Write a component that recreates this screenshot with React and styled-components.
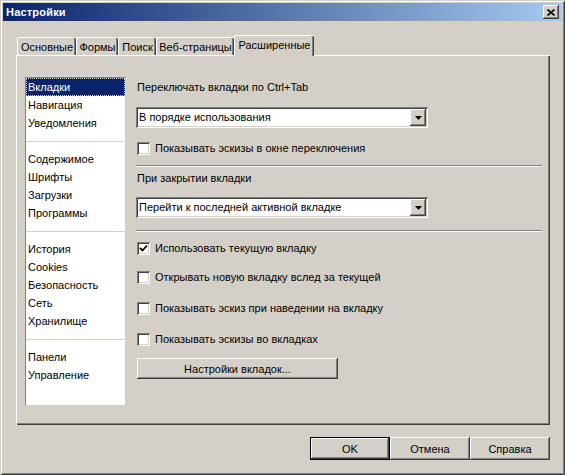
import React from 'react';
import styled, { createGlobalStyle } from 'styled-components';

const GlobalStyle = createGlobalStyle`
  html, body {
    margin: 0;
    padding: 0;
    background: #d4d0c8;
  }
  body {
    font-family: "Liberation Sans", Tahoma, Arial, sans-serif;
    font-size: 11px;
    color: #000;
  }
`;

// classic 3D edges
const raised = `
  box-shadow: inset -1px -1px #404040, inset 1px 1px #ffffff,
    inset -2px -2px #808080, inset 2px 2px #d4d0c8;
`;
const sunken = `
  box-shadow: inset 1px 1px #808080, inset -1px -1px #ffffff,
    inset 2px 2px #404040, inset -2px -2px #d4d0c8;
`;

const Window = styled.div`
  width: 565px;
  height: 475px;
  box-sizing: border-box;
  padding: 3px;
  background: #d4d0c8;
  box-shadow: inset 1px 1px #d4d0c8, inset -1px -1px #404040,
    inset 2px 2px #ffffff, inset -2px -2px #808080;
  display: flex;
  flex-direction: column;
`;

const TitleBar = styled.div`
  height: 18px;
  display: flex;
  align-items: center;
  justify-content: space-between;
  padding: 0 3px 0 3px;
  background: linear-gradient(90deg, #0a246a 0%, #a6caf0 100%);
`;

const Title = styled.span`
  color: #fff;
  font-weight: bold;
  font-size: 11px;
  letter-spacing: 0.2px;
`;

const CloseButton = styled.div`
  width: 16px;
  height: 14px;
  background: #d4d0c8;
  ${raised}
  display: flex;
  align-items: center;
  justify-content: center;
`;

const TabStrip = styled.div`
  display: flex;
  align-items: flex-end;
  height: 21px;
  margin-top: 14px;
  padding-left: 14px;
  position: relative;
  z-index: 1;
`;

const Tab = styled.div`
  width: ${p => p.$w}px;
  height: ${p => (p.$active ? 21 : 18)}px;
  margin-bottom: ${p => (p.$active ? 0 : 1)}px;
  box-sizing: border-box;
  background: #d4d0c8;
  border-top: 1px solid #fff;
  border-left: 1px solid #fff;
  border-radius: 2px 2px 0 0;
  box-shadow: inset -1px 0 #404040, inset -2px 0 #808080;
  display: flex;
  align-items: center;
  justify-content: center;
  padding-bottom: ${p => (p.$active ? 2 : 0)}px;
  white-space: nowrap;
`;

const Panel = styled.div`
  margin: -1px 0 0 13px;
  width: 534px;
  height: 370px;
  box-sizing: border-box;
  padding: 22px 0 0 9px;
  box-shadow: inset 1px 1px #ffffff, inset -1px -1px #404040, inset -2px -2px #808080;
  display: flex;
  align-items: flex-start;
`;

const ListBox = styled.div`
  width: 101px;
  height: 329px;
  box-sizing: border-box;
  background: #fff;
  border: 1px solid;
  border-color: #808080 #d4d0c8 #d4d0c8 #808080;
  display: flex;
  flex-direction: column;
`;

const ListItem = styled.div`
  height: 18px;
  line-height: 19px;
  padding-left: 2px;
  white-space: nowrap;
  background: ${p => (p.$selected ? '#0a246a' : 'transparent')};
  color: ${p => (p.$selected ? '#fff' : '#000')};
  outline: ${p => (p.$selected ? '1px dotted #d4d0c8' : 'none')};
  outline-offset: -1px;
`;

const ListSeparator = styled.div`
  height: 18px;
  display: flex;
  align-items: center;

  &::after {
    content: '';
    flex: 1;
    height: 1px;
    background: #d4d0c8;
  }
`;

const Content = styled.div`
  margin-left: 11px;
  width: 406px;
  display: flex;
  flex-direction: column;
  align-items: flex-start;
`;

const Label = styled.div`
  height: 20px;
  line-height: 20px;
  margin-top: ${p => p.$mt || 0}px;
`;

const Select = styled.div`
  width: 292px;
  height: 21px;
  box-sizing: border-box;
  padding: 2px;
  margin-top: ${p => p.$mt || 0}px;
  margin-left: -1px;
  background: #fff;
  ${sunken}
  display: flex;
  align-items: stretch;
`;

const SelectText = styled.div`
  flex: 1;
  padding-left: 1px;
  line-height: 17px;
`;

const DropButton = styled.div`
  width: 16px;
  background: #d4d0c8;
  ${raised}
  display: flex;
  align-items: center;
  justify-content: center;
`;

const CheckRow = styled.div`
  height: 18px;
  margin-top: ${p => p.$mt || 0}px;
  display: flex;
  align-items: center;
  gap: 5px;
`;

const CheckBox = styled.div`
  width: 13px;
  height: 13px;
  box-sizing: border-box;
  background: #fff;
  ${sunken}
  display: flex;
  align-items: center;
  justify-content: center;
`;

const Separator = styled.div`
  width: 406px;
  margin-top: ${p => p.$mt || 0}px;
  margin-left: -1px;
  border-top: 1px solid #808080;
  border-bottom: 1px solid #ffffff;
`;

const Button = styled.div`
  width: ${p => p.$w}px;
  height: ${p => p.$h || 21}px;
  margin-top: ${p => p.$mt || 0}px;
  box-sizing: border-box;
  background: #d4d0c8;
  ${raised}
  display: flex;
  align-items: center;
  justify-content: center;
`;

const DefaultButton = styled(Button)`
  box-shadow: inset 0 0 0 1px #000000, inset -2px -2px #404040, inset 2px 2px #ffffff,
    inset -3px -3px #808080;
`;

const Footer = styled.div`
  display: flex;
  justify-content: flex-end;
  margin-top: 12px;
  padding-right: 12px;
`;

const CloseIcon = () => (
  <svg width="8" height="7" viewBox="0 0 8 7">
    <path d="M0.5 0.5 L7.5 6.5 M7.5 0.5 L0.5 6.5" stroke="#000" strokeWidth="1.6" />
  </svg>
);

const ArrowIcon = () => (
  <svg width="7" height="4" viewBox="0 0 7 4">
    <path d="M0 0 H7 L3.5 4 Z" fill="#000" />
  </svg>
);

const CheckIcon = () => (
  <svg width="9" height="9" viewBox="0 0 9 9">
    <path d="M1 4 L3.5 6.5 L8 1.5" stroke="#000" strokeWidth="1.8" fill="none" />
  </svg>
);

const tabs = [
  { label: 'Основные', w: 59 },
  { label: 'Формы', w: 42 },
  { label: 'Поиск', w: 38 },
  { label: 'Веб-страницы', w: 78 },
  { label: 'Расширенные', w: 80, active: true },
];

const groups = [
  ['Вкладки', 'Навигация', 'Уведомления'],
  ['Содержимое', 'Шрифты', 'Загрузки', 'Программы'],
  ['История', 'Cookies', 'Безопасность', 'Сеть', 'Хранилище'],
  ['Панели', 'Управление'],
];

export default function App() {
  return (
    <>
      <GlobalStyle />
      <Window>
        <TitleBar>
          <Title>Настройки</Title>
          <CloseButton>
            <CloseIcon />
          </CloseButton>
        </TitleBar>

        <TabStrip>
          {tabs.map(t => (
            <Tab key={t.label} $w={t.w} $active={t.active}>
              {t.label}
            </Tab>
          ))}
        </TabStrip>

        <Panel>
          <ListBox>
            {groups.map((g, gi) => (
              <React.Fragment key={gi}>
                {gi > 0 && <ListSeparator />}
                {g.map(item => (
                  <ListItem key={item} $selected={item === 'Вкладки'}>
                    {item}
                  </ListItem>
                ))}
              </React.Fragment>
            ))}
          </ListBox>

          <Content>
            <Label>Переключать вкладки по Ctrl+Tab</Label>
            <Select $mt={10}>
              <SelectText>В порядке использования</SelectText>
              <DropButton>
                <ArrowIcon />
              </DropButton>
            </Select>
            <CheckRow $mt={11}>
              <CheckBox />
              Показывать эскизы в окне переключения
            </CheckRow>

            <Separator $mt={8} />

            <Label $mt={1}>При закрытии вкладки</Label>
            <Select $mt={9}>
              <SelectText>Перейти к последней активной вкладке</SelectText>
              <DropButton>
                <ArrowIcon />
              </DropButton>
            </Select>

            <Separator $mt={12} />

            <CheckRow $mt={7}>
              <CheckBox>
                <CheckIcon />
              </CheckBox>
              Использовать текущую вкладку
            </CheckRow>
            <CheckRow $mt={11}>
              <CheckBox />
              Открывать новую вкладку вслед за текущей
            </CheckRow>
            <CheckRow $mt={13}>
              <CheckBox />
              Показывать эскиз при наведении на вкладку
            </CheckRow>
            <CheckRow $mt={13}>
              <CheckBox />
              Показывать эскизы во вкладках
            </CheckRow>
            <Button $w={201} $mt={10}>Настройки вкладок...</Button>
          </Content>
        </Panel>

        <Footer>
          <DefaultButton $w={80} $h={23}>OK</DefaultButton>
          <Button $w={80} $h={23}>Отмена</Button>
          <Button $w={80} $h={23}>Справка</Button>
        </Footer>
      </Window>
    </>
  );
}
